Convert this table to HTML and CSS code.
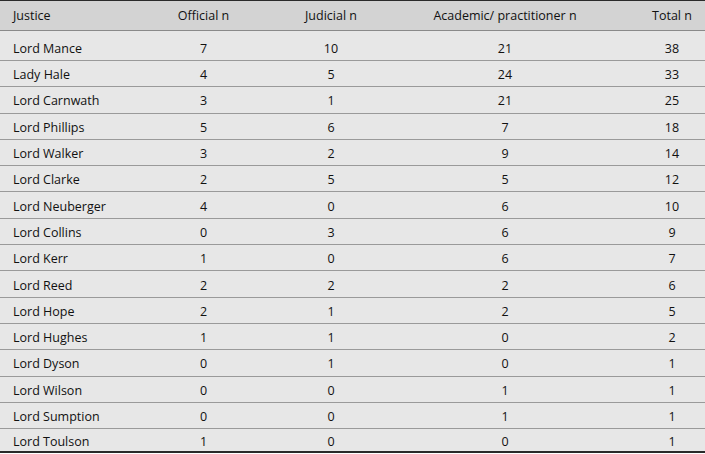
FILE: index.html
```
<!DOCTYPE html>
<html>
<head>
<meta charset="utf-8">
<link rel="stylesheet" href="styles.css">
</head>
<body>
<table class="data">
  <colgroup>
    <col class="c1"><col class="c2"><col class="c3"><col class="c4"><col class="c5">
  </colgroup>
  <thead>
    <tr><th class="name">Justice</th><th>Official n</th><th>Judicial n</th><th>Academic/ practitioner n</th><th>Total n</th></tr>
  </thead>
  <tbody>
    <tr class="first"><td class="name">Lord Mance</td><td>7</td><td>10</td><td>21</td><td>38</td></tr>
    <tr><td class="name">Lady Hale</td><td>4</td><td>5</td><td>24</td><td>33</td></tr>
    <tr><td class="name">Lord Carnwath</td><td>3</td><td>1</td><td>21</td><td>25</td></tr>
    <tr><td class="name">Lord Phillips</td><td>5</td><td>6</td><td>7</td><td>18</td></tr>
    <tr><td class="name">Lord Walker</td><td>3</td><td>2</td><td>9</td><td>14</td></tr>
    <tr><td class="name">Lord Clarke</td><td>2</td><td>5</td><td>5</td><td>12</td></tr>
    <tr><td class="name">Lord Neuberger</td><td>4</td><td>0</td><td>6</td><td>10</td></tr>
    <tr><td class="name">Lord Collins</td><td>0</td><td>3</td><td>6</td><td>9</td></tr>
    <tr><td class="name">Lord Kerr</td><td>1</td><td>0</td><td>6</td><td>7</td></tr>
    <tr><td class="name">Lord Reed</td><td>2</td><td>2</td><td>2</td><td>6</td></tr>
    <tr><td class="name">Lord Hope</td><td>2</td><td>1</td><td>2</td><td>5</td></tr>
    <tr><td class="name">Lord Hughes</td><td>1</td><td>1</td><td>0</td><td>2</td></tr>
    <tr><td class="name">Lord Dyson</td><td>0</td><td>1</td><td>0</td><td>1</td></tr>
    <tr><td class="name">Lord Wilson</td><td>0</td><td>0</td><td>1</td><td>1</td></tr>
    <tr><td class="name">Lord Sumption</td><td>0</td><td>0</td><td>1</td><td>1</td></tr>
    <tr class="last"><td class="name">Lord Toulson</td><td>1</td><td>0</td><td>0</td><td>1</td></tr>
  </tbody>
</table>
</body>
</html>
```
FILE: styles.css
```
html, body {
  margin: 0;
  padding: 0;
  background: #ffffff;
}

.data {
  width: 705px;
  border-collapse: collapse;
  table-layout: fixed;
  font-family: "Open Sans", "Noto Sans", sans-serif;
  font-size: 12.5px;
  color: #111111;
  background: #e7e7e7;
  border-top: 1px solid #2a2a2a;
}

.c1 { width: 116px; }
.c2 { width: 175px; }
.c3 { width: 80px; }
.c4 { width: 268px; }
.c5 { width: 66px; }

.data th,
.data td {
  padding: 0 13px;
  text-align: center;
  white-space: nowrap;
  font-weight: normal;
  vertical-align: middle;
  line-height: 17px;
}

.data th.name,
.data td.name {
  text-align: left;
}

.data thead th {
  background: #d3d3d3;
  height: 28px;
  border-bottom: 1px solid #8a8a8a;
  padding-bottom: 1px;
}

.data tbody td {
  height: 23.3px;
  border-bottom: 1px solid #9a9a9a;
  padding-top: 2px;
}

.data tbody tr.first td {
  height: 23px;
  padding-top: 6px;
}

.data tbody tr.last td {
  height: 19px;
  padding-top: 3px;
  border-bottom: 2px solid #2a2a2a;
}
```
